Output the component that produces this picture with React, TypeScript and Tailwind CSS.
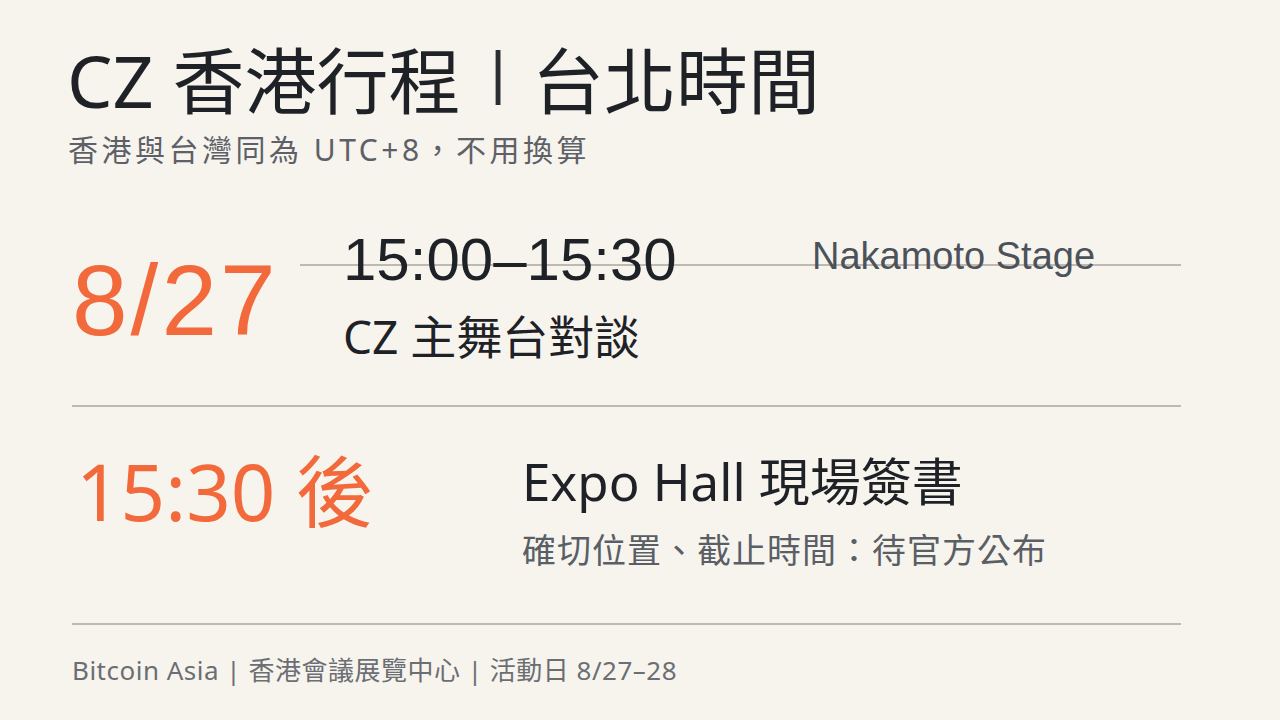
import React from "react";

const sans = "font-['Noto_Sans','Noto_Sans_CJK_TC',sans-serif]";
const arial = "font-['Liberation_Sans','Noto_Sans_CJK_TC',sans-serif]";

export default function App() {
  return (
    <div className={`flex h-[720px] w-[1280px] flex-col bg-[#f7f4ee] pl-[72px] pr-[99px] pt-[40px] text-[#1e2227] ${sans}`}>
      {/* 標題 */}
      <h1 className="-ml-[5px] whitespace-nowrap text-[72px] font-normal leading-[80px]">
        CZ 香港行程{" "}
        <span className={`relative -top-[15px] inline-block w-[34px] pl-[4px] text-center text-[60px] leading-none text-[#2a2e33] ${arial}`}>|</span>{" "}
        台北時間
      </h1>
      <p className="-ml-[4px] mt-[10px] text-[30px] leading-[40px] tracking-[3.5px] text-[#5d6167]">
        香港與台灣同為 UTC+8，不用換算
      </p>

      {/* 8/27 */}
      <div className="mt-[50px] flex h-[185px]">
        <div className={`w-[228px] pt-[30px] text-[100px] leading-[100px] tracking-[3px] text-[#f26a3c] ${arial}`}>8/27</div>
        <div className="relative flex-1">
          <div className="absolute left-0 right-0 top-[44px] h-[2px] bg-[#bebab1]" />
          <div className="relative grid grid-cols-[469px_1fr] pl-[43px]">
            <div>
              <div className={`mt-[10px] text-[60px] leading-[60px] ${arial}`}>15:00–15:30</div>
              <div className="mt-[19px] text-[46px] leading-[54px]">CZ 主舞台對談</div>
            </div>
            <div className={`mt-[17px] text-[38px] leading-[38px] text-[#4b525a] ${arial}`}>Nakamoto Stage</div>
          </div>
        </div>
      </div>
      <div className="h-[2px] bg-[#bebab1]" />

      {/* 15:30 後 */}
      <div className="flex h-[216px]">
        <div className="w-[450px] pl-[4px] pt-[45px] text-[78px] leading-[78px] text-[#f26a3c]">15:30 後</div>
        <div className="pt-[45px]">
          <div className="text-[51px] leading-[58px]">Expo Hall 現場簽書</div>
          <div className="mt-[20px] text-[34px] leading-[40px] tracking-[1px] text-[#5a5f66]">確切位置、截止時間：待官方公布</div>
        </div>
      </div>
      <div className="h-[2px] bg-[#bebab1]" />

      {/* 頁尾 */}
      <p className="mt-[29px] text-[26px] leading-[32px] tracking-[0.5px] text-[#6b6e73]">
        Bitcoin Asia | 香港會議展覽中心 | 活動日 8/27–28
      </p>
    </div>
  );
}
